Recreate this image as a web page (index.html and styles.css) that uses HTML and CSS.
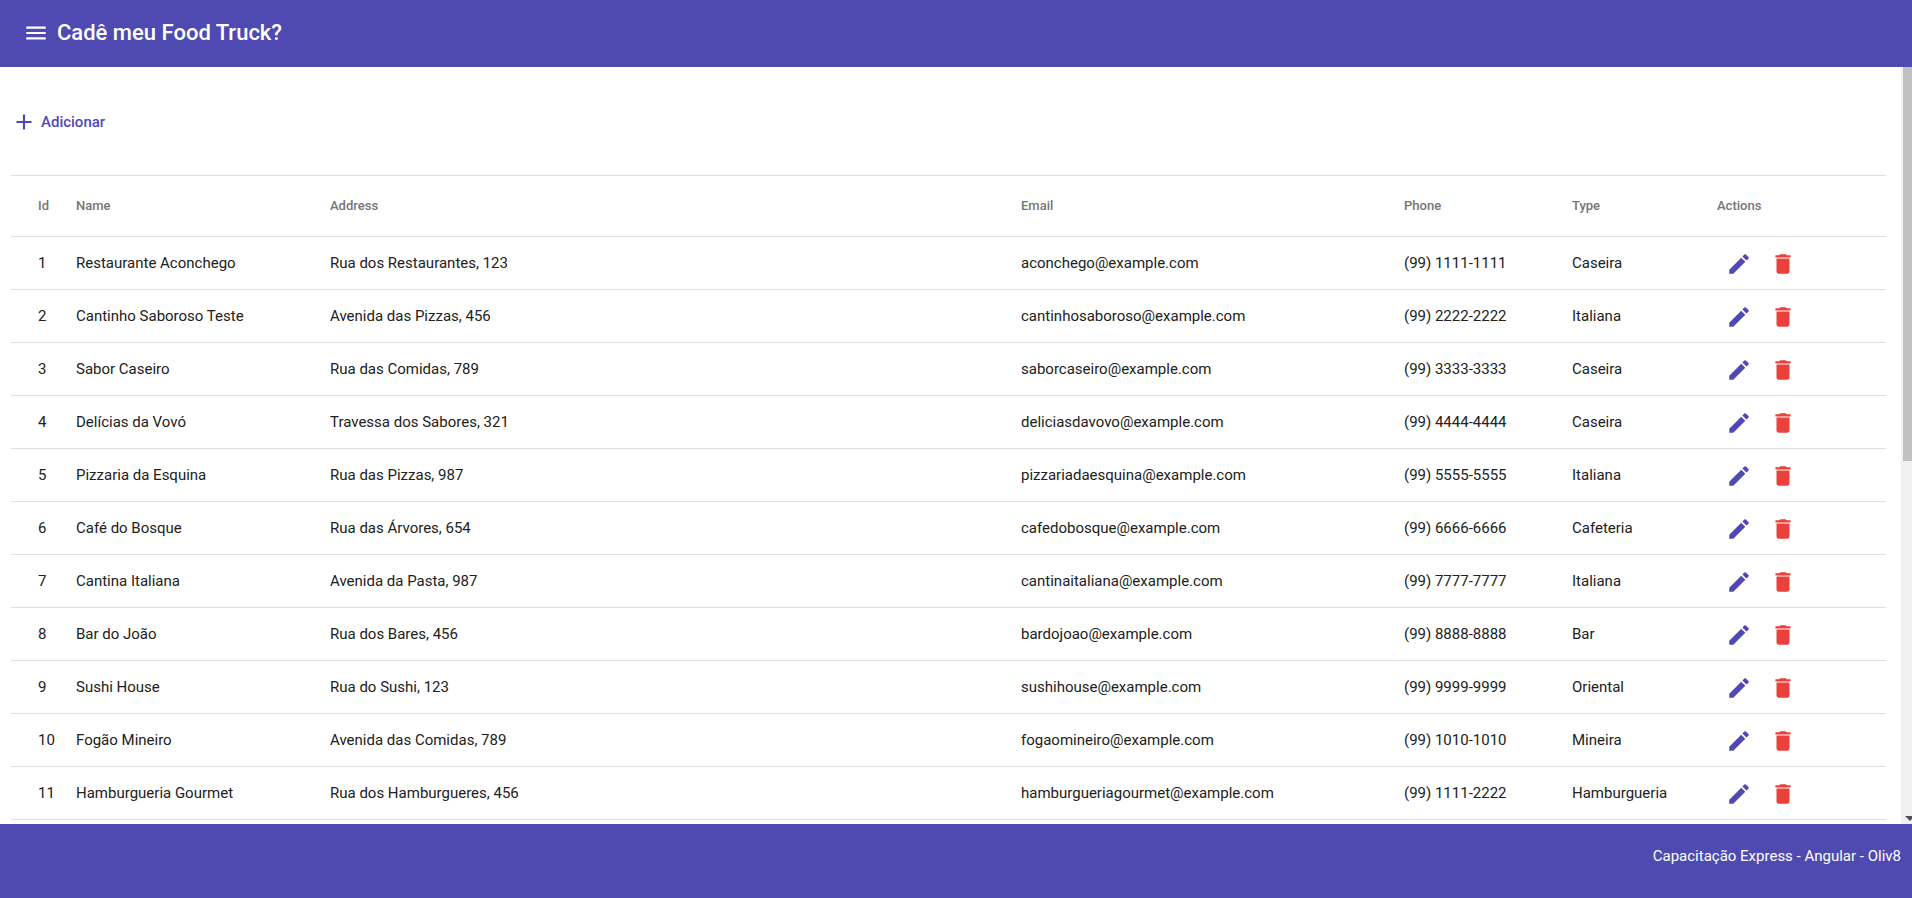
FILE: index.html
```html
<!DOCTYPE html>
<html lang="pt-BR">
<head>
<meta charset="utf-8">
<title>Cadê meu Food Truck?</title>
<link rel="stylesheet" href="styles.css">
</head>
<body>
<svg class="sprite" aria-hidden="true">
  <symbol id="menu" viewBox="0 0 24 24"><path d="M3 18h18v-2H3v2zm0-5h18v-2H3v2zm0-7v2h18V6H3z"/></symbol>
  <symbol id="add" viewBox="0 0 24 24"><path d="M19 13h-6v6h-2v-6H5v-2h6V5h2v6h6v2z"/></symbol>
  <symbol id="edit" viewBox="0 0 24 24"><path d="M3 17.25V21h3.75L17.81 9.94l-3.75-3.75L3 17.25zM20.71 7.04a1 1 0 0 0 0-1.41l-2.34-2.34a1 1 0 0 0-1.41 0l-1.83 1.83 3.75 3.75 1.83-1.83z"/></symbol>
  <symbol id="delete" viewBox="0 0 24 24"><path d="M6 19c0 1.1.9 2 2 2h8c1.1 0 2-.9 2-2V7H6v12zM19 4h-3.5l-1-1h-5l-1 1H5v2h14V4z"/></symbol>
</svg>
<header class="toolbar">
  <button class="icon-button menu-button" type="button" aria-label="Menu"><svg class="icon"><use href="#menu"/></svg></button>
  <h1 class="title">Cadê meu Food Truck?</h1>
</header>
<div class="body">
  <main class="content">
    <button class="add-button" type="button"><svg class="icon"><use href="#add"/></svg>Adicionar</button>
    <table class="table">
      <colgroup><col class="col-id"><col class="col-name"><col><col class="col-email"><col class="col-phone"><col class="col-type"><col class="col-actions"></colgroup>
      <thead><tr><th>Id</th><th>Name</th><th>Address</th><th>Email</th><th>Phone</th><th>Type</th><th>Actions</th></tr></thead>
      <tbody id="rows"></tbody>
    </table>
  </main>
  <div class="scroll-track" aria-hidden="true">
    <div class="scroll-thumb"></div>
    <div class="scroll-end"><svg class="scroll-arrow" viewBox="0 0 10 5"><path d="M0 0h10L5 5z"/></svg></div>
  </div>
</div>
<footer class="footer">Capacitação Express - Angular - Oliv8</footer>
<script src="app.js"></script>
</body>
</html>
```
FILE: app.js
```js
const trucks = [
  ["Restaurante Aconchego", "Rua dos Restaurantes, 123", "aconchego@example.com", "(99) 1111-1111", "Caseira"],
  ["Cantinho Saboroso Teste", "Avenida das Pizzas, 456", "cantinhosaboroso@example.com", "(99) 2222-2222", "Italiana"],
  ["Sabor Caseiro", "Rua das Comidas, 789", "saborcaseiro@example.com", "(99) 3333-3333", "Caseira"],
  ["Delícias da Vovó", "Travessa dos Sabores, 321", "deliciasdavovo@example.com", "(99) 4444-4444", "Caseira"],
  ["Pizzaria da Esquina", "Rua das Pizzas, 987", "pizzariadaesquina@example.com", "(99) 5555-5555", "Italiana"],
  ["Café do Bosque", "Rua das Árvores, 654", "cafedobosque@example.com", "(99) 6666-6666", "Cafeteria"],
  ["Cantina Italiana", "Avenida da Pasta, 987", "cantinaitaliana@example.com", "(99) 7777-7777", "Italiana"],
  ["Bar do João", "Rua dos Bares, 456", "bardojoao@example.com", "(99) 8888-8888", "Bar"],
  ["Sushi House", "Rua do Sushi, 123", "sushihouse@example.com", "(99) 9999-9999", "Oriental"],
  ["Fogão Mineiro", "Avenida das Comidas, 789", "fogaomineiro@example.com", "(99) 1010-1010", "Mineira"],
  ["Hamburgueria Gourmet", "Rua dos Hamburgueres, 456", "hamburgueriagourmet@example.com", "(99) 1111-2222", "Hamburgueria"]
];
const button = (icon, label) =>
  `<button class="icon-button ${icon}-button" type="button" aria-label="${label}"><svg class="icon"><use href="#${icon}"/></svg></button>`;
document.getElementById("rows").innerHTML = trucks.map((truck, i) =>
  `<tr>${[i + 1, ...truck].map(value => `<td>${value}</td>`).join("")}<td><div class="actions">${button("edit", "Editar " + truck[0])}${button("delete", "Excluir " + truck[0])}</div></td></tr>`
).join("");
```
FILE: styles.css
```css
* { box-sizing: border-box; }

body {
  margin: 0;
  height: 100vh;
  display: flex;
  flex-direction: column;
  background: #fff;
  color: #212121;
  font-family: Roboto, "Liberation Sans", sans-serif;
  font-size: 15px;
  line-height: 22px;
}

button {
  border: 0;
  background: none;
  font: inherit;
  cursor: pointer;
}

.sprite { position: absolute; width: 0; height: 0; }

.icon { display: block; width: 26px; height: 26px; fill: currentColor; }

.toolbar {
  flex: none;
  display: flex;
  align-items: center;
  gap: 8px;
  height: 67px;
  padding: 0 23px 2px;
  background: #4e4ab2;
  color: #fff;
}

.icon-button { padding: 0; }

.menu-button { color: #fff; }

.title { margin: 0; font-size: 22px; line-height: 34px; font-weight: 500; }

.body { flex: 1; min-height: 0; display: flex; }

.content { flex: 1; min-width: 0; padding: 35px 15px 0 11px; overflow: hidden; }

.add-button {
  display: flex;
  align-items: center;
  gap: 4px;
  height: 40px;
  padding: 0;
  color: #4e4ab2;
  font-weight: 500;
}

.table {
  width: 100%;
  margin-top: 33px;
  border-top: 1px solid #e0e0e0;
  border-spacing: 0;
  table-layout: fixed;
}

.table th, .table td {
  padding: 0;
  border-bottom: 1px solid #e0e0e0;
  text-align: left;
}

.table th { height: 61px; color: #757575; font-size: 13px; font-weight: 500; }

.table td { height: 53px; }

.table th:first-child, .table td:first-child { padding-left: 27px; }

.col-id { width: 65px; }
.col-name { width: 254px; }
.col-email { width: 383px; }
.col-phone { width: 168px; }
.col-type { width: 145px; }
.col-actions { width: 169px; }

.actions { display: flex; gap: 18px; padding: 2px 9px 0; }

.edit-button { color: #4e4ab2; }
.delete-button { color: #ec403c; }

.scroll-track {
  flex: none;
  display: flex;
  flex-direction: column;
  justify-content: space-between;
  width: 11px;
  padding-left: 2px;
  background: #f0f0f0;
  overflow: hidden;
}

.scroll-thumb { height: 52%; background: #c1c1c1; }

.scroll-end { padding: 0 0 3px 2px; }

.scroll-arrow { display: block; width: 10px; height: 5px; fill: #505050; }

.footer {
  flex: none;
  height: 74px;
  padding: 21px 11px;
  background: #4e4ab2;
  color: #fff;
  text-align: right;
}
```
